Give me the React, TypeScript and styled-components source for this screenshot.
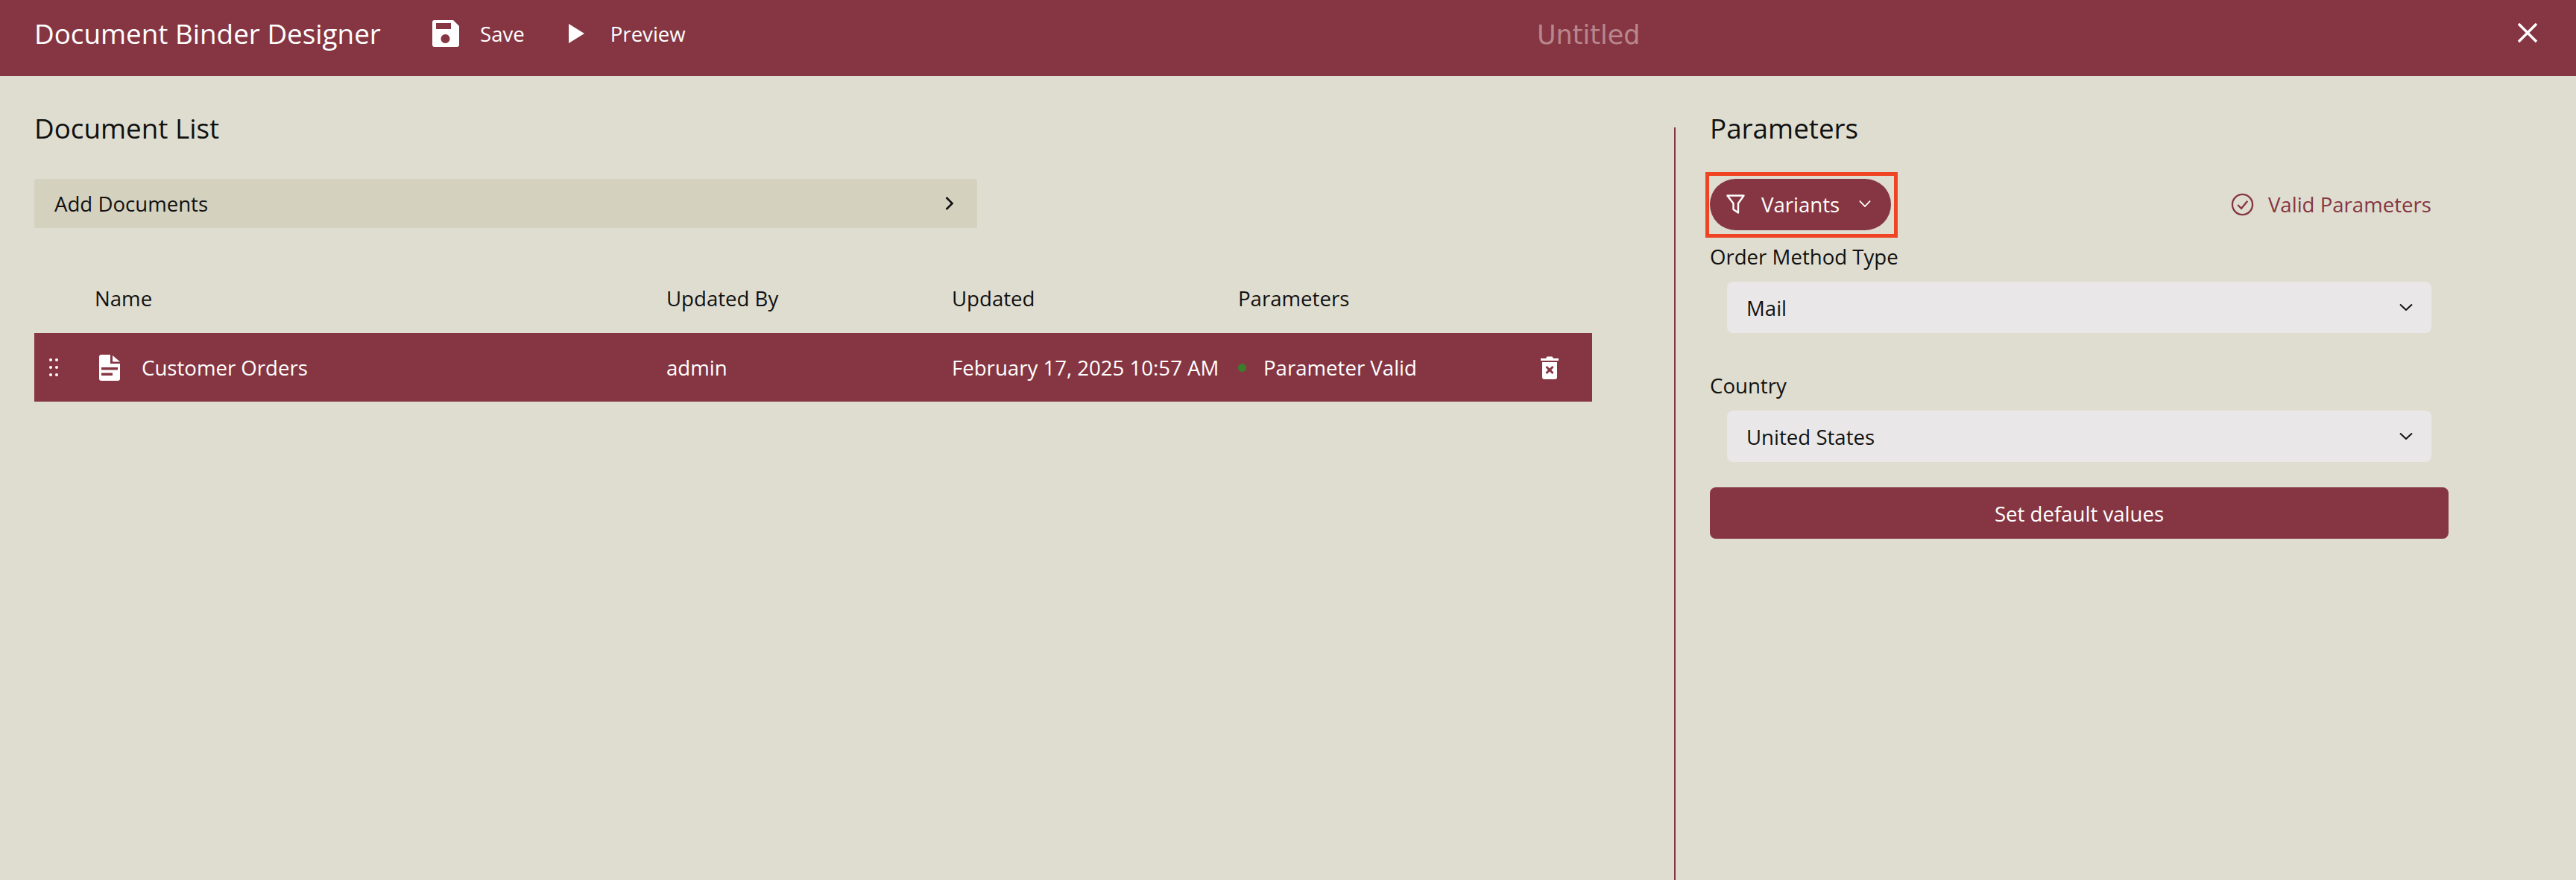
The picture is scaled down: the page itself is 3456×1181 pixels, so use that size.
import React from 'react';
import styled, {createGlobalStyle} from 'styled-components';

const maroon = '#863642';

const GlobalStyle = createGlobalStyle`
  html, body {
    margin: 0;
    padding: 0;
    background: #dfddd0;
    font-family: "Open Sans", "Noto Sans", sans-serif;
    color: #111;
  }
  * {
    box-sizing: border-box;
  }
`

const Chevron = ({width = 18, height = 9, stroke = 2}: {width?: number; height?: number; stroke?: number}) => (
    <svg width={width} height={height} viewBox="0 0 18 9" preserveAspectRatio="none" fill="none" stroke="currentColor" strokeWidth={stroke}>
        <path d="M1 0.5 L9 8 L17 0.5"/>
    </svg>
);

export default function App() {
    return (
        <Page>
            <GlobalStyle/>
            <Header>
                <AppTitle>Document Binder Designer</AppTitle>
                <HeaderAction>
                    <svg width="36" height="36" viewBox="0 0 36 36" fill="#fff">
                        <path fillRule="evenodd" d="M3 0 H28 L36 8 V33 a3 3 0 0 1 -3 3 H3 a3 3 0 0 1 -3 -3 V3 a3 3 0 0 1 3 -3 Z M5 4 V12 H25 V4 Z M17.5 19 a6 6 0 1 0 0.01 0 Z"/>
                    </svg>
                    <span>Save</span>
                </HeaderAction>
                <HeaderAction>
                    <svg width="28" height="36" viewBox="0 0 28 36" fill="#fff">
                        <path d="M0 5 L21 18 L0 31 Z"/>
                    </svg>
                    <span>Preview</span>
                </HeaderAction>
                <Untitled>Untitled</Untitled>
                <CloseButton>
                    <svg width="30" height="30" viewBox="0 0 30 30" stroke="#fff" strokeWidth="3.4" fill="none">
                        <path d="M3 3 L27 27 M27 3 L3 27"/>
                    </svg>
                </CloseButton>
            </Header>
            <Body>
                <LeftPanel>
                    <PanelTitle>Document List</PanelTitle>
                    <AddBar>
                        <span>Add Documents</span>
                        <svg width="24" height="24" viewBox="0 0 24 24" fill="none" stroke="#111" strokeWidth="2.6">
                            <path d="M8.5 4 L16.5 12 L8.5 20"/>
                        </svg>
                    </AddBar>
                    <TableHead>
                        <span>Name</span>
                        <span>Updated By</span>
                        <span>Updated</span>
                        <span>Parameters</span>
                    </TableHead>
                    <TableRow>
                        <NameCell>
                            <svg width="12" height="24" viewBox="0 0 12 24" fill="#fff">
                                <circle cx="2" cy="2" r="2"/>
                                <circle cx="10" cy="2" r="2"/>
                                <circle cx="2" cy="12" r="2"/>
                                <circle cx="10" cy="12" r="2"/>
                                <circle cx="2" cy="22" r="2"/>
                                <circle cx="10" cy="22" r="2"/>
                            </svg>
                            <DocIcon width="28" height="35" viewBox="0 0 28 35" fill="#fff">
                                <path fillRule="evenodd" d="M3 0 H15 V12 H28 V32 a3 3 0 0 1 -3 3 H3 a3 3 0 0 1 -3 -3 V3 a3 3 0 0 1 3 -3 Z M3 17 V20.5 H25 V17 Z M3 24.5 V28 H18 V24.5 Z"/>
                                <path d="M18 1 L28 9.5 H18 Z"/>
                            </DocIcon>
                            <span>Customer Orders</span>
                        </NameCell>
                        <span>admin</span>
                        <span>February 17, 2025 10:57 AM</span>
                        <ParamCell>
                            <StatusDot/>
                            <span>Parameter Valid</span>
                        </ParamCell>
                        <TrashButton>
                            <svg width="24" height="31" viewBox="0 0 24 31" fill="#fff">
                                <path d="M0 3 H7 L8.5 0.5 H15.5 L17 3 H24 V6 H0 Z"/>
                                <path fillRule="evenodd" d="M2 8 H22 V28 a3 3 0 0 1 -3 3 H5 a3 3 0 0 1 -3 -3 Z M8.5 13 L6.5 15 L9.8 18.5 L6.5 22 L8.5 24 L12 20.6 L15.5 24 L17.5 22 L14.2 18.5 L17.5 15 L15.5 13 L12 16.4 Z"/>
                            </svg>
                        </TrashButton>
                    </TableRow>
                </LeftPanel>
                <Divider/>
                <RightPanel>
                    <PanelTitle>Parameters</PanelTitle>
                    <VariantRow>
                        <Highlight>
                            <VariantsButton>
                                <svg width="25" height="26" viewBox="0 0 25 26" fill="none" stroke="#fff" strokeWidth="2.4" strokeLinejoin="round">
                                    <path d="M1.5 1.5 H23.5 L16 12 V24.5 L9.5 20 V12 Z"/>
                                </svg>
                                <span>Variants</span>
                                <Chevron width={16} stroke={1.8}/>
                            </VariantsButton>
                        </Highlight>
                        <ValidStatus>
                            <svg width="31" height="31" viewBox="0 0 32 32" fill="none" stroke={maroon} strokeWidth="2.4">
                                <circle cx="16" cy="16" r="14"/>
                                <path d="M9.5 16.5 L14.5 21.5 L23 11"/>
                            </svg>
                            <span>Valid Parameters</span>
                        </ValidStatus>
                    </VariantRow>
                    <Field>
                        <FieldLabel>Order Method Type</FieldLabel>
                        <Select>
                            <span>Mail</span>
                            <Chevron/>
                        </Select>
                    </Field>
                    <Field>
                        <FieldLabel>Country</FieldLabel>
                        <Select>
                            <span>United States</span>
                            <Chevron/>
                        </Select>
                    </Field>
                    <DefaultButton>Set default values</DefaultButton>
                </RightPanel>
            </Body>
        </Page>
    );
}

const Page = styled.div`
  display: flex;
  flex-direction: column;
  height: 1181px;
  overflow: hidden;
`
const Header = styled.header`
  height: 102px;
  flex-shrink: 0;
  background: ${maroon};
  color: #fff;
  display: flex;
  align-items: center;
  padding: 0 0 12px 46px;
  position: relative;
`
const AppTitle = styled.div`
  font-size: 36.8px;
  width: 464px;
  margin-right: 70px;
  white-space: nowrap;
`
const HeaderAction = styled.div`
  display: flex;
  align-items: center;
  gap: 28px;
  font-size: 27.6px;
  margin-right: 59px;
`
const Untitled = styled.div`
  position: absolute;
  left: 2062px;
  top: 26px;
  font-family: "DejaVu Sans", sans-serif;
  font-size: 35px;
  line-height: 42px;
  color: #b8868d;
`
const CloseButton = styled.div`
  position: absolute;
  left: 3376px;
  top: 29px;
  width: 30px;
  height: 30px;
`
const Body = styled.div`
  flex: 1;
  display: flex;
  min-height: 0;
`
const LeftPanel = styled.section`
  width: 2246px;
  padding: 46px 110px 0 46px;
  flex-shrink: 0;
`
const Divider = styled.div`
  width: 2px;
  margin-top: 69px;
  background: ${maroon};
`
const RightPanel = styled.section`
  flex: 1;
  padding: 46px 0 0 46px;
`
const PanelTitle = styled.h2`
  margin: 0;
  font-size: 36.8px;
  font-weight: 400;
  line-height: 48px;
`
const AddBar = styled.div`
  width: 1265px;
  height: 66px;
  margin-top: 44px;
  background: #d4d1bf;
  border-radius: 3px;
  padding: 0 26px 0 27px;
  display: flex;
  align-items: center;
  justify-content: space-between;
  font-size: 27.6px;
`
const TableHead = styled.div`
  display: grid;
  grid-template-columns: 767px 383px 384px 1fr;
  height: 141px;
  align-items: end;
  padding-left: 81px;
  padding-bottom: 28px;
  font-size: 27.6px;
`
const TableRow = styled.div`
  display: grid;
  grid-template-columns: 848px 383px 384px 1fr 88px;
  align-items: center;
  height: 92px;
  background: ${maroon};
  color: #fff;
  font-size: 27.6px;
  white-space: nowrap;
`
const NameCell = styled.div`
  display: flex;
  align-items: center;
  padding-left: 20px;
`
const DocIcon = styled.svg`
  margin-left: 55px;
  margin-right: 29px;
`
const ParamCell = styled.div`
  display: flex;
  align-items: center;
  gap: 23px;
`
const StatusDot = styled.span`
  width: 11px;
  height: 11px;
  border-radius: 50%;
  background: #3a7d2c;
`
const TrashButton = styled.div`
  display: flex;
  align-items: center;
  padding-left: 19px;
`
const VariantRow = styled.div`
  margin-top: 44px;
  width: 968px;
  display: flex;
  align-items: center;
  justify-content: space-between;
`
const Highlight = styled.div`
  border: 5px solid #ee4424;
  padding: 4px 4px 5px 1px;
  margin: -9px 0 -10px -6px;
`
const VariantsButton = styled.button`
  display: flex;
  align-items: center;
  width: 243px;
  height: 69px;
  padding: 0 0 2px 22px;
  border: 0;
  border-radius: 35px;
  background: ${maroon};
  color: #fff;
  font-family: inherit;
  font-size: 27.6px;

  span {
    margin-left: 22px;
    width: 131px;
    text-align: left;
  }
`
const ValidStatus = styled.div`
  display: flex;
  align-items: center;
  gap: 19px;
  color: ${maroon};
  font-size: 27.6px;

  span {
    margin-top: -2px;
  }
`
const Field = styled.div`
  width: 968px;
  padding-top: 17px;
  margin-bottom: 35px;
`
const FieldLabel = styled.div`
  font-size: 27.6px;
  line-height: 36px;
  margin-bottom: 16px;
`
const Select = styled.div`
  margin-left: 23px;
  height: 69px;
  padding: 0 25px 0 26px;
  background: #e9e7e7;
  border-radius: 8px;
  display: flex;
  align-items: center;
  justify-content: space-between;
  font-size: 27.6px;
`
const DefaultButton = styled.button`
  display: block;
  width: 991px;
  height: 69px;
  margin-top: -1px;
  border: 0;
  border-radius: 8px;
  background: ${maroon};
  color: #fff;
  font-family: inherit;
  font-size: 27.6px;
`
